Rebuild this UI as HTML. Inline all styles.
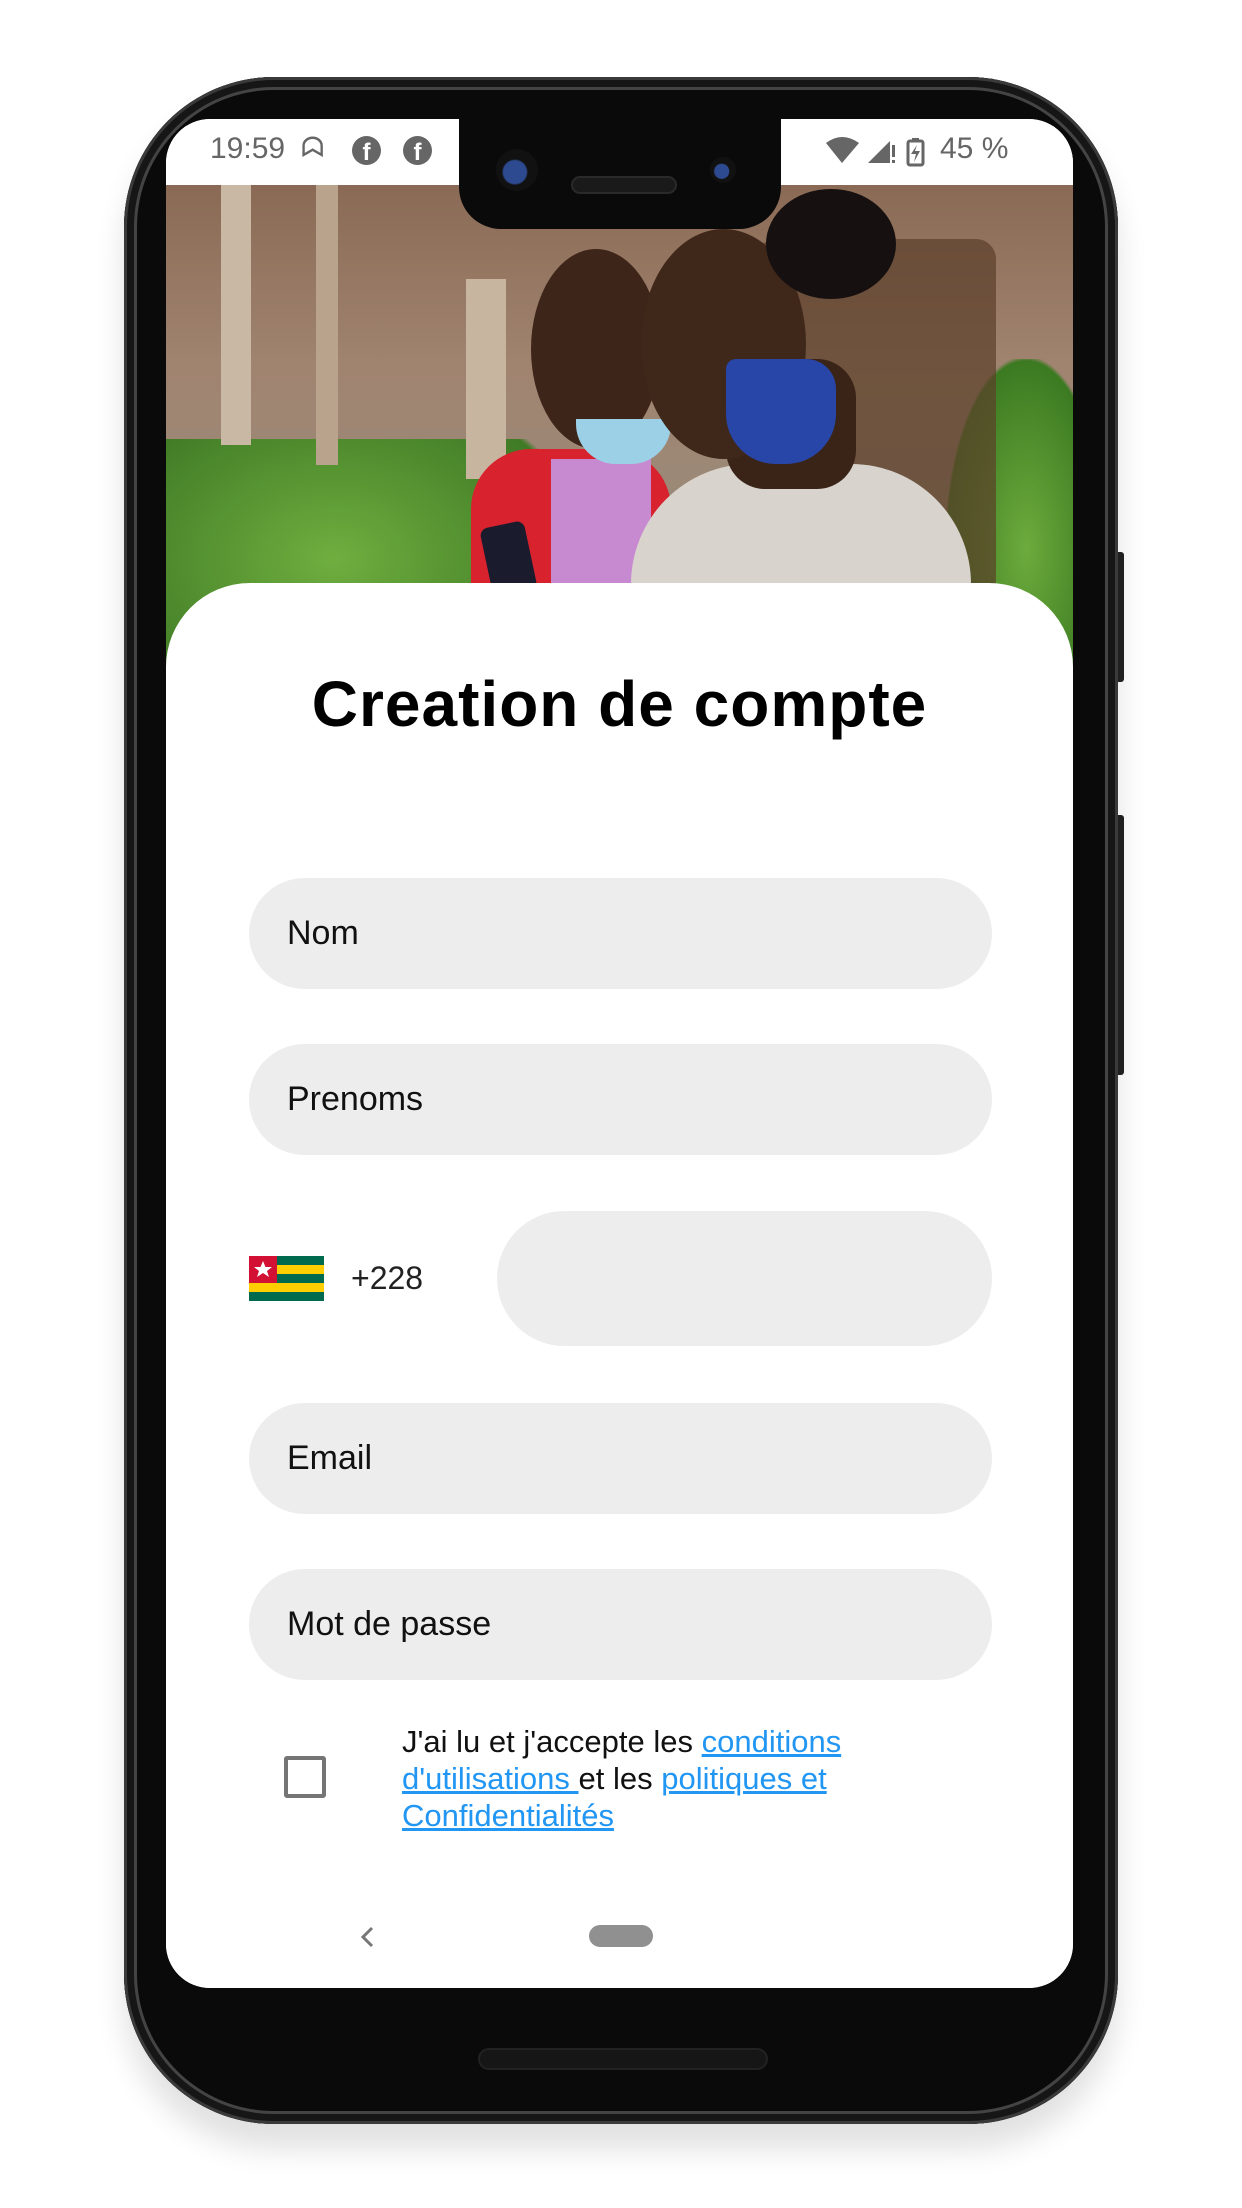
<!DOCTYPE html>
<html><head><meta charset="utf-8"><style>
*{margin:0;padding:0;box-sizing:border-box}
body{width:1242px;height:2208px;background:#fff;position:relative;overflow:hidden;font-family:"Liberation Sans",sans-serif}
.abs{position:absolute}
.phone{left:124px;top:77px;width:994px;height:2047px;border-radius:150px;background:#0a0a0a;box-shadow:0 0 0 3px #3a3a3a inset,0 0 0 10px #161616 inset,0 0 0 13px #444 inset,0 25px 30px rgba(0,0,0,.12)}
.screen{left:166px;top:119px;width:907px;height:1869px;border-radius:44px;background:#fff;overflow:hidden}
.field{position:absolute;left:83px;width:743px;height:111px;border-radius:56px;background:#ededed;font-size:34px;color:#111;padding-left:38px;line-height:111px}
.sb{position:absolute;top:13px;font-size:30px;color:#666}
a{color:#2196f3;text-decoration:underline}
</style></head><body>
<div class="abs" style="left:1114px;top:552px;width:10px;height:130px;background:#222;border-radius:3px"></div>
<div class="abs" style="left:1114px;top:815px;width:10px;height:260px;background:#222;border-radius:3px"></div>
<div class="abs phone"></div>
<div class="abs screen">
  <div class="abs" style="left:0;top:66px;width:907px;height:600px;background:linear-gradient(180deg,#8a6a55 0%,#a08470 30%,#9a8a78 55%,#5f8a3a 72%,#4e8a2e 100%)"></div>
  <div class="abs" style="left:0;top:320px;width:420px;height:300px;background:radial-gradient(ellipse at 40% 40%,#6fae3f,#3f7a25 70%,transparent 72%)"></div>
  <div class="abs" style="left:780px;top:240px;width:160px;height:380px;background:radial-gradient(ellipse,#6cab3c,#3c7a22 70%,transparent 72%)"></div>
  <div class="abs" style="left:55px;top:66px;width:30px;height:260px;background:#c9b8a4"></div>
  <div class="abs" style="left:150px;top:66px;width:22px;height:280px;background:#b9a38c"></div>
  <div class="abs" style="left:300px;top:160px;width:40px;height:200px;background:#c7b59f"></div>
  <div class="abs" style="left:590px;top:120px;width:240px;height:360px;background:#5b3e2a;border-radius:20px;opacity:.7"></div>
  <div class="abs" style="left:305px;top:330px;width:200px;height:260px;background:#d8222e;border-radius:60px 60px 0 0"></div>
  <div class="abs" style="left:385px;top:340px;width:100px;height:250px;background:#c78ad0"></div>
  <div class="abs" style="left:365px;top:130px;width:130px;height:200px;background:#3d2619;border-radius:50%"></div>
  <div class="abs" style="left:410px;top:300px;width:95px;height:45px;background:#9cd0e6;border-radius:0 0 40px 40px"></div>
  <div class="abs" style="left:465px;top:345px;width:340px;height:260px;background:#d9d3ce;border-radius:120px 120px 0 0"></div>
  <div class="abs" style="left:560px;top:240px;width:130px;height:130px;background:#3a2418;border-radius:30%"></div>
  <div class="abs" style="left:475px;top:110px;width:165px;height:230px;background:#3f271a;border-radius:50%"></div>
  <div class="abs" style="left:600px;top:70px;width:130px;height:110px;background:#161010;border-radius:50%"></div>
  <div class="abs" style="left:560px;top:240px;width:110px;height:105px;background:#2845a8;border-radius:10px 30px 50px 50px"></div>
  <div class="abs" style="left:320px;top:405px;width:45px;height:70px;background:#1b1b2e;border-radius:8px;transform:rotate(-12deg)"></div>
  <div class="abs" style="left:0;top:0;width:907px;height:66px;background:#fff"></div>
  <div class="sb" style="left:44px">19:59</div>
  <div class="sb" style="left:135px;font-size:28px">&#x15E3;</div>
  <div class="abs" style="left:186px;top:17px;width:29px;height:29px;border-radius:50%;background:#666;color:#fff;font:bold 24px/33px 'Liberation Sans';text-align:center">f</div>
  <div class="abs" style="left:237px;top:17px;width:29px;height:29px;border-radius:50%;background:#666;color:#fff;font:bold 24px/33px 'Liberation Sans';text-align:center">f</div>
  <svg class="abs" style="left:660px;top:16px" width="110" height="34"><path d="M0 8 Q16 -4 33 8 L16 28Z" fill="#666"/><path d="M42 28 L64 6 L64 28Z" fill="#666"/><rect x="66" y="10" width="3" height="12" fill="#666"/><rect x="66" y="25" width="3" height="3" fill="#666"/><rect x="82" y="6" width="15" height="24" rx="2" fill="none" stroke="#666" stroke-width="3"/><rect x="86" y="3" width="7" height="3" fill="#666"/><path d="M91 10 L85 19 L90 19 L88 27 L94 16 L89 16Z" fill="#666"/></svg>
  <div class="sb" style="left:774px">45 %</div>
  <div class="abs" style="left:293px;top:-10px;width:322px;height:120px;background:#0a0a0a;border-radius:0 0 42px 42px"></div>
  <div class="abs" style="left:330px;top:30px;width:42px;height:42px;border-radius:50%;background:radial-gradient(circle at 45% 55%,#2d4a90 0 35%,#111 40%)"></div>
  <div class="abs" style="left:405px;top:57px;width:106px;height:18px;border-radius:9px;background:#1a1a1a;border:2px solid #2a2a2a"></div>
  <div class="abs" style="left:544px;top:38px;width:26px;height:26px;border-radius:50%;background:radial-gradient(circle at 45% 55%,#2d4a90 0 35%,#111 40%)"></div>
  <div class="abs" style="left:0;top:464px;width:907px;height:1420px;background:#fff;border-radius:84px 84px 0 0"></div>
  <div class="abs" style="left:0;top:548px;width:907px;text-align:center;font-weight:bold;font-size:64px;letter-spacing:1px;color:#000">Creation de compte</div>
  <div class="field" style="top:759px">Nom</div>
  <div class="field" style="top:925px">Prenoms</div>
  <svg class="abs" style="left:83px;top:1137px" width="75" height="45"><rect width="75" height="45" fill="#006a4e"/><rect y="9" width="75" height="9" fill="#ffce00"/><rect y="27" width="75" height="9" fill="#ffce00"/><rect width="28" height="27" fill="#d21034"/><polygon points="14,5 16.5,11 23,11 18,15 20,21 14,17 8,21 10,15 5,11 11.5,11" fill="#fff"/></svg>
  <div class="abs" style="left:185px;top:1141px;font-size:32px;color:#222">+228</div>
  <div class="abs" style="left:331px;top:1092px;width:495px;height:135px;border-radius:68px;background:#ededed"></div>
  <div class="field" style="top:1284px">Email</div>
  <div class="field" style="top:1450px">Mot de passe</div>
  <div class="abs" style="left:118px;top:1637px;width:42px;height:42px;border:4px solid #757575;border-radius:3px"></div>
  <div class="abs" style="left:236px;top:1604px;font-size:31px;line-height:37px;color:#111;width:520px">J'ai lu et j'accepte les <a>conditions</a><br><a>d'utilisations </a> et les <a>politiques et</a><br><a>Confidentialités</a></div>
  <svg class="abs" style="left:190px;top:1804px" width="24" height="30"><path d="M16 5 L7 14 L16 23" fill="none" stroke="#777" stroke-width="3"/></svg>
  <div class="abs" style="left:423px;top:1806px;width:64px;height:22px;border-radius:11px;background:#909090"></div>
</div>
<div class="abs" style="left:478px;top:2048px;width:290px;height:22px;border-radius:11px;background:#161616;border:2px solid #222"></div>
</body></html>
